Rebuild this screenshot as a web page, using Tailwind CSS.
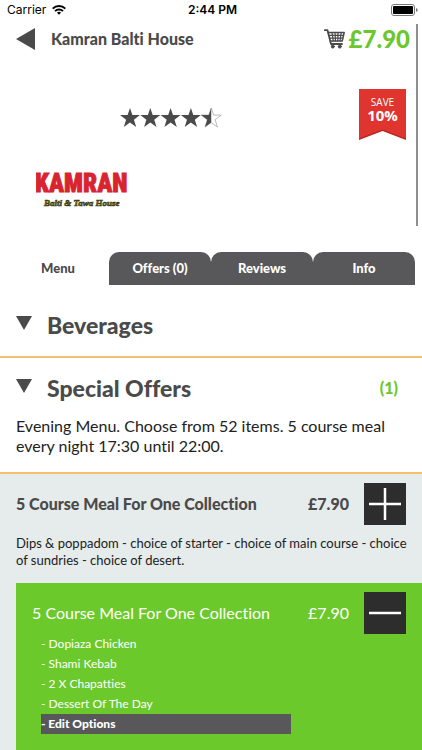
<!DOCTYPE html>
<html lang="en">
<head>
<meta charset="utf-8">
<meta name="viewport" content="width=device-width, initial-scale=1">
<title>Kamran Balti House</title>
<script src="https://cdn.jsdelivr.net/npm/@tailwindcss/browser@4"></script>
</head>
<body class="bg-white font-[Lato,sans-serif] text-[#4a4a4a] overflow-x-hidden [font-variant-ligatures:no-common-ligatures]">
<div class="relative flex min-h-screen flex-col">
  <div class="absolute right-1 top-6 z-10 h-[202px] w-[2px] bg-[#8e8e8e]"></div>

  <div class="grid h-5 grid-cols-3 items-center pl-[7px] pr-1 font-[Inter,sans-serif] text-[12px] leading-5 text-black">
    <div class="flex items-center gap-[6px]">
      <span>Carrier</span>
      <svg class="h-[10px] w-[14px]" viewBox="0 0 14 10" fill="none" stroke="#000" stroke-width="2" aria-hidden="true">
        <path d="M.7 3.6a9 9 0 0 1 12.600 0"/><path d="M3 6.100a5.700 5.700 0 0 1 8 0"/><path d="M7 9.700 5 7.700a2.900 2.900 0 0 1 4 0z" fill="#000" stroke="none"/>
      </svg>
    </div>
    <span class="text-center font-semibold">2:44 PM</span>
    <svg class="h-3 w-[27px] justify-self-end" viewBox="0 0 27 12" aria-hidden="true">
      <rect x=".5" y=".5" width="23" height="11" rx="2.500" fill="none" stroke="#777"/><rect x="2" y="2" width="20" height="8" rx="1" fill="#000"/><path d="M25 4v4c1.300-.5 1.700-1.200 1.700-2S26.300 4.500 25 4z" fill="#777"/>
    </svg>
  </div>

  <header class="flex h-[38px] items-center pl-4 pr-3">
    <button aria-label="Back" class="h-[22px] w-[19px]"><svg viewBox="0 0 19 22" class="h-full w-full"><path d="M0 11 19 0v22z" fill="#4a4a4a"/></svg></button>
    <h1 class="ml-4 flex-1 text-[16px] font-black leading-5">Kamran Balti House</h1>
    <a href="#basket" class="flex items-center gap-1 text-[#6cc72b]">
      <svg class="h-5 w-[21px]" viewBox="0 0 21 20" fill="none" stroke="#4a4a4a" stroke-linecap="round" stroke-linejoin="round" aria-hidden="true">
        <path d="M.8 1.200h2.700L7 15h11" stroke-width="1.800"/><path d="M4.200 3.500h16l-2 8.500H6.300" stroke-width="1.500"/><path d="M5 6.300h14.500M5.700 9.200h13M8 3.500l1.300 8.500M11 3.500l.5 8.500M14 3.500l-.2 8.500M17.200 3.500 16 12" stroke-width="1.200"/><circle cx="8.800" cy="17.600" r="1.500" fill="#4a4a4a"/><circle cx="15.800" cy="17.600" r="1.500" fill="#4a4a4a"/>
      </svg>
      <span class="text-[24px] font-black leading-8">£7.90</span>
    </a>
  </header>

  <section class="flex h-[194px] justify-between pl-9 pr-4">
    <div class="flex flex-col">
      <svg class="ml-[84px] mt-[50px] h-5 w-[102px]" viewBox="0 0 102 20" role="img" aria-label="4.5 out of 5 stars">
        <defs><path id="star" d="M10 0 12.400 7.100H20L13.900 11.700 16.200 19 10 14.600 3.800 19 6.100 11.700 0 7.100H7.600z"/></defs>
        <g fill="#4a4a4a"><use href="#star"/><use href="#star" x="20.300"/><use href="#star" x="40.600"/><use href="#star" x="60.900"/></g>
        <use href="#star" x="81.200" fill="#fff" stroke="#aaa" stroke-width=".8"/>
        <path d="M91.200 0V14.600L85 19 87.300 11.700 81.200 7.100H88.800z" fill="#4a4a4a"/>
      </svg>
      <svg class="mt-10 h-[46px] w-[100px]" viewBox="0 0 100 46" role="img" aria-label="Kamran Balti &amp; Tawa House">
        <text x="-1" y="24" font-family="Roboto Condensed, Open Sans Condensed, Roboto, sans-serif" font-weight="900" font-size="25" fill="#d9232e" stroke="#d9232e" stroke-width=".8">KAMRAN</text>
        <text x="8" y="38" font-family="Liberation Serif, serif" font-style="italic" font-weight="700" font-size="9" fill="#77751c" stroke="#34350c" stroke-width=".6">Balti &amp; Tawa House</text>
      </svg>
    </div>
    <div class="relative mt-[31px] h-[51px] w-[47px] text-center font-['Open_Sans',sans-serif] text-white">
      <svg viewBox="0 0 47 51" class="absolute inset-0 h-full w-full" aria-hidden="true"><path d="M0 0H47V51L23.500 42 0 51z" fill="#b92520"/><path d="M0 0H47V49.500L23.500 40.500 0 49.500z" fill="#e0342f"/></svg>
      <div class="relative pt-[6px] text-[10px] leading-[14px]">SAVE</div>
      <div class="relative text-[15px] font-bold leading-3">10%</div>
    </div>
  </section>

  <nav class="mx-[7px] grid h-[34px] grid-cols-4 border-b border-transparent text-[13px] font-black text-white">
    <a href="#menu" class="flex items-center justify-center text-[#4a4a4a]">Menu</a>
    <a href="#offers" class="flex items-center justify-center rounded-t-[10px] bg-[#58585a]">Offers (0)</a>
    <a href="#reviews" class="flex items-center justify-center rounded-t-[10px] bg-[#58585a]">Reviews</a>
    <a href="#info" class="flex items-center justify-center rounded-t-[10px] bg-[#58585a]">Info</a>
  </nav>

  <main class="flex flex-1 flex-col">
    <section class="border-b-2 border-[#f5bf6e] pb-[15px] pt-[23px]">
      <button class="flex w-full items-center gap-[15px] px-4 text-left">
        <svg class="mb-1 h-[14px] w-4" viewBox="0 0 16 14" aria-hidden="true"><path d="M0 0H16L8 14z" fill="#4a4a4a"/></svg>
        <span class="text-[23px] font-black leading-8">Beverages</span>
      </button>
    </section>

    <section class="border-b-2 border-[#f5bf6e] pb-4 pt-[14px]">
      <button class="flex w-full items-center gap-[15px] pl-4 pr-6 text-left">
        <svg class="mb-1 h-[14px] w-4" viewBox="0 0 16 14" aria-hidden="true"><path d="M0 0H16L8 14z" fill="#4a4a4a"/></svg>
        <span class="flex-1 text-[23px] font-black leading-8">Special Offers</span>
        <span class="text-[16px] font-black text-[#6cc72b]">(1)</span>
      </button>
      <p class="px-4 pt-3 text-[16px] leading-5 text-[#222]">Evening Menu. Choose from 52 items. 5 course meal every night 17:30 until 22:00.</p>
    </section>

    <section class="flex flex-1 flex-col bg-[#e6ebeb]">
      <div class="flex items-center pl-4 pr-4 pt-[9px]">
        <h2 class="flex-1 text-[16px] font-black leading-5">5 Course Meal For One Collection</h2>
        <span class="mr-[15px] text-[16px] font-black leading-5">£7.90</span>
        <button aria-label="Add" class="size-[42px] bg-[#2d2d2d]"><svg viewBox="0 0 42 42" class="h-full w-full" stroke="#fff" stroke-width="2.500"><path d="M5 21H37M21 5V37"/></svg></button>
      </div>
      <p class="pb-[14px] pl-4 pr-2 pt-[10px] text-[13px] leading-[17px] text-[#222]">Dips &amp; poppadom - choice of starter - choice of main course - choice of sundries - choice of desert.</p>

      <div class="ml-4 flex-1 bg-[#6cc92b] pl-4 pr-4 pt-[9px] text-white">
        <div class="flex items-center">
          <h2 class="flex-1 text-[16px] leading-5">5 Course Meal For One Collection</h2>
          <span class="mr-[15px] text-[16px] leading-5">£7.90</span>
          <button aria-label="Remove" class="size-[42px] bg-[#2d2d2d]"><svg viewBox="0 0 42 42" class="h-full w-full" stroke="#fff" stroke-width="2.500"><path d="M5 21H37"/></svg></button>
        </div>
        <ul class="ml-[9px] w-[250px] text-[12px] leading-5">
          <li>- Dopiaza Chicken</li>
          <li>- Shami Kebab</li>
          <li>- 2 X Chapatties</li>
          <li>- Dessert Of The Day</li>
          <li><button class="block w-full bg-[#58585a] text-left font-black">- Edit Options</button></li>
        </ul>
      </div>
    </section>
  </main>
</div>
</body>
</html>
